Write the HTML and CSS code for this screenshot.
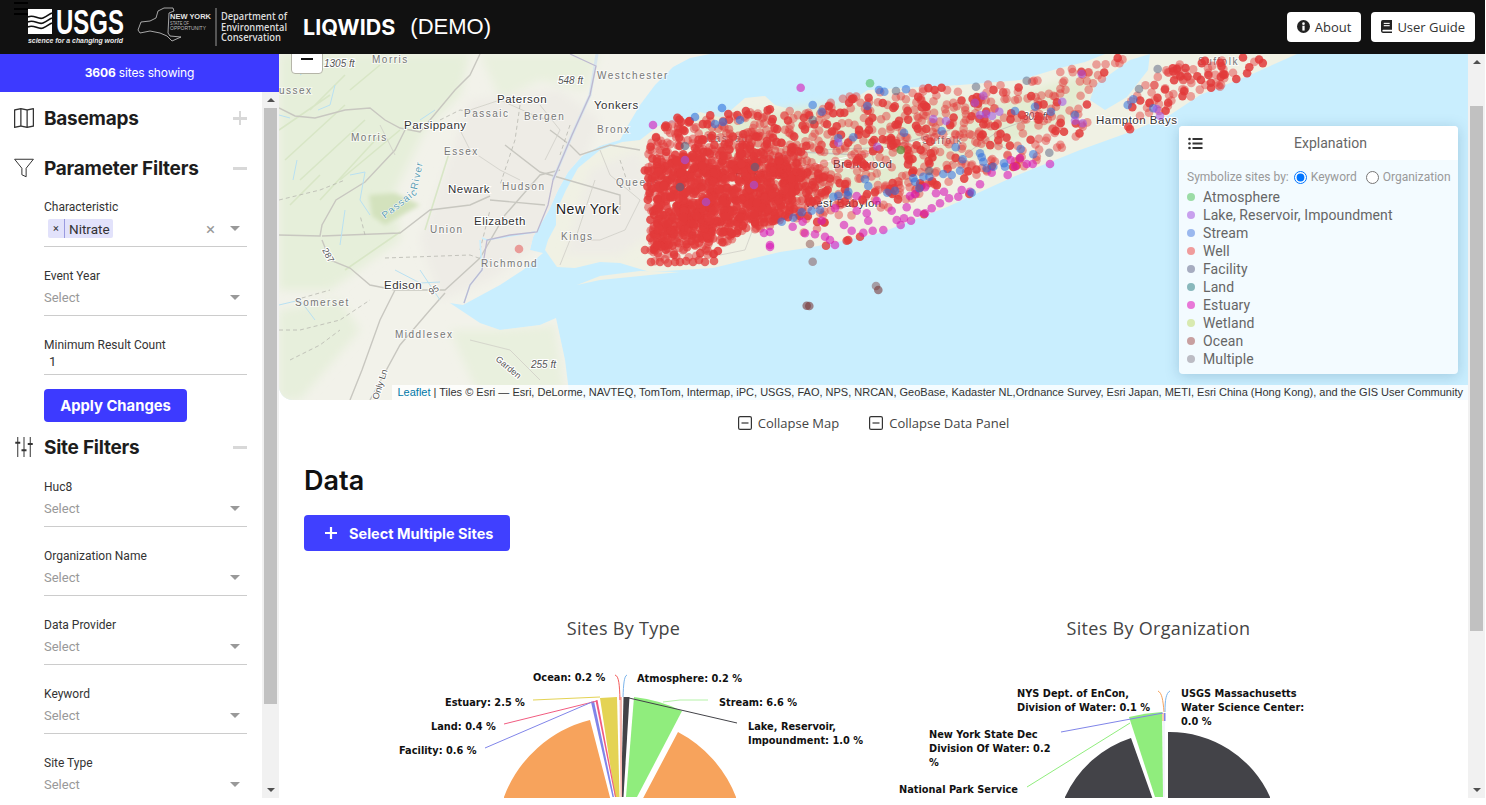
FILE: index.html
```html
<!DOCTYPE html>
<html lang="en">
<head>
    <meta charset="UTF-8">
    <meta name="viewport" content="width=device-width, initial-scale=1.0">
    <title>LIQWIDS (DEMO)</title>
    <link rel="stylesheet" href="styles.css">
</head>
<body>
    <header class="topbar">
        <div class="hamburger"><span></span><span></span><span></span></div>
        <svg class="logos" width="272" height="54" viewBox="28 0 272 54">
            <g class="usgs-mark">
                <rect x="28" y="9" width="24" height="25" fill="#fff"/>
                <path d="M28 17c6-3 10 3 15 1s6-4 9-5M28 22c6-3 10 3 15 1s6-4 9-5M28 27c6-3 10 3 15 1s6-4 9-5" fill="none" stroke="#111" stroke-width="1.7"/>
            </g>
            <text class="usgs-word" x="56" y="34" textLength="68" lengthAdjust="spacingAndGlyphs">USGS</text>
            <text class="usgs-tag" x="28" y="43" textLength="95" lengthAdjust="spacingAndGlyphs">science for a changing world</text>
            <path class="ny-state" d="M138 30 141 22 150 21 156 18 158 11 164 8 173 8 174 11 169 13 168 33 170 36 181 37 172 41 169 38 167 36 160 33 150 31 140 33Z"/>
            <text class="ny-big" x="170" y="19" textLength="41" lengthAdjust="spacingAndGlyphs">NEW YORK</text>
            <text class="ny-small" x="170" y="25" textLength="19" lengthAdjust="spacingAndGlyphs">STATE OF</text>
            <text class="ny-small" x="170" y="30" textLength="36" lengthAdjust="spacingAndGlyphs">OPPORTUNITY</text>
            <rect x="215.500" y="8" width="1" height="38" fill="#999"/>
            <text class="dec" x="221" y="20" textLength="66" lengthAdjust="spacingAndGlyphs">Department of</text>
            <text class="dec" x="221" y="31" textLength="66" lengthAdjust="spacingAndGlyphs">Environmental</text>
            <text class="dec" x="221" y="41" textLength="60" lengthAdjust="spacingAndGlyphs">Conservation</text>
        </svg>
        <div class="app-title">LIQWIDS</div>
        <div class="app-demo">(DEMO)</div>
        <div class="topbar-actions">
            <button class="top-btn">
                <svg width="13" height="13" viewBox="0 0 16 16"><circle cx="8" cy="8" r="8" fill="#222"/><rect x="6.600" y="7" width="2.800" height="6" fill="#fff"/><circle cx="8" cy="4.500" r="1.600" fill="#fff"/></svg>
                About
            </button>
            <button class="top-btn">
                <svg width="11" height="13" viewBox="0 0 12 14"><path d="M2 0h10v10.500H2.500a1 1 0 0 0 0 2H12V14H2a2 2 0 0 1-2-2V2a2 2 0 0 1 2-2z" fill="#222"/><rect x="3" y="3" width="6.500" height="1.200" fill="#fff"/><rect x="3" y="5.500" width="6.500" height="1.200" fill="#fff"/></svg>
                User Guide
            </button>
        </div>
    </header>

    <div class="app">
        <aside class="sidebar">
            <div class="sites-showing"><b>3606</b> sites showing</div>
            <div class="sidebar-body">
                <div class="filters">
                    <div class="section-head">
                        <svg class="section-icon" viewBox="0 0 16 16" fill="#333"><path fill-rule="evenodd" d="M15.817.113A.5.5 0 0 1 16 .5v14a.5.5 0 0 1-.402.49l-5 1a.502.502 0 0 1-.196 0L5.500 15.010l-4.902.98A.5.5 0 0 1 0 15.500v-14a.5.5 0 0 1 .402-.49l5-1a.5.5 0 0 1 .196 0L10.500.990l4.902-.98a.5.5 0 0 1 .415.103zM10 1.910l-4-.8v12.980l4 .8V1.910zm1 12.980 4-.8V1.110l-4 .8v12.980zm-6-.8V1.110l-4 .8v12.980l4-.8z"/></svg>
                        <h3>Basemaps</h3>
                        <span class="toggle plus"></span>
                    </div>
                    <div class="section-head">
                        <svg class="section-icon" viewBox="0 0 16 16" fill="none" stroke="#333" stroke-width=".8"><path d="M.5 1h15L9.700 8.200v6.800l-3.400-1.600V8.200z"/></svg>
                        <h3>Parameter Filters</h3>
                        <span class="toggle"></span>
                    </div>
                    <div class="section-fields">
                        <div class="field">
                            <label>Characteristic</label>
                            <div class="control">
                                <span class="tag"><span class="tag-x">×</span><span class="tag-text">Nitrate</span></span>
                                <span class="clear">×</span>
                                <span class="caret"></span>
                            </div>
                        </div>
                        <div class="field">
                            <label>Event Year</label>
                            <div class="control"><span class="placeholder">Select</span><span class="caret"></span></div>
                        </div>
                        <div class="field field-short">
                            <label>Minimum Result Count</label>
                            <div class="control"><span class="count">1</span></div>
                        </div>
                        <button class="apply-btn">Apply Changes</button>
                    </div>
                    <div class="section-head">
                        <svg class="section-icon" viewBox="0 0 16 16" fill="none" stroke="#333" stroke-width=".8"><path d="M3 0v16M8 0v16M13 0v16"/><path d="M1 4.500h4M6 10.500h4M11 5.500h4" stroke-width="1.600"/></svg>
                        <h3>Site Filters</h3>
                        <span class="toggle"></span>
                    </div>
                    <div class="section-fields site-fields">
                        <div class="field"><label>Huc8</label><div class="control"><span class="placeholder">Select</span><span class="caret"></span></div></div>
                        <div class="field"><label>Organization Name</label><div class="control"><span class="placeholder">Select</span><span class="caret"></span></div></div>
                        <div class="field"><label>Data Provider</label><div class="control"><span class="placeholder">Select</span><span class="caret"></span></div></div>
                        <div class="field"><label>Keyword</label><div class="control"><span class="placeholder">Select</span><span class="caret"></span></div></div>
                        <div class="field"><label>Site Type</label><div class="control"><span class="placeholder">Select</span><span class="caret"></span></div></div>
                    </div>
                </div>
                <div class="scrollbar">
                    <span class="arrow-up"></span>
                    <div class="track side-track"><div class="thumb"></div></div>
                    <span class="arrow-down"></span>
                </div>
            </div>
        </aside>

        <main class="content">
            <div class="content-scroll">
                <section class="map">
                    <svg class="map-canvas" viewBox="279 54 1189 346" preserveAspectRatio="none">
                        <defs>
                            <filter id="soft"><feGaussianBlur stdDeviation="5"/></filter>
                            <filter id="softer"><feGaussianBlur stdDeviation="2"/></filter>
                            <clipPath id="land-clip"><path d="M279 54H710L690 58 673 67 655 85 640 105 627 127 620 140 600 146 582 156 568 172 558 190 549 210 533 237 530 250 543 253 523 270 500 285 463 305 450 303 480 323 500 330 540 325 556 318 565 360 570 400H279Z"/></clipPath>
                        </defs>
                        <rect x="279" y="54" width="1189" height="346" fill="#c9eefe"/>
                        <path fill="#f2f2ea" d="M279 54H710L690 58 673 67 655 85 640 105 627 127 620 140 600 146 582 156 568 172 558 190 549 210 533 237 530 250 543 253 523 270 500 285 463 305 450 303 480 323 500 330 540 325 556 318 565 360 570 400H279Z"/>
                        <path fill="#f0f1e4" d="M622 142 640 140 658 126 685 120 700 112 722 118 745 98 765 96 775 105 800 112 840 108 868 90 900 88 960 85 1020 80 1060 68 1085 62 1105 54H1297L1250 75 1200 95 1170 115 1130 132 1080 150 1013 177 947 207 880 233 813 247 780 252 713 268 650 272 620 263 600 262 575 268 557 267 545 250 548 240 556 225 556 212 566 190 578 168 600 150Z"/>
                        <path fill="#f0f1e4" d="M577 285 600 276 640 271 680 272 640 276 600 280Z"/>
                        <path fill="#c9eefe" d="M1095 85 1130 60 1150 54 1148 70 1127 97 1105 110 1090 100Z"/>
                        <g clip-path="url(#land-clip)">
                            <g filter="url(#soft)">
                                <path fill="#e6efda" d="M279 54H470L460 95 425 130 395 190 400 240 330 290 279 290Z"/>
                                <path fill="#e9f0de" d="M480 54H600L585 90 540 80 500 100Z"/>
                                <path fill="#e7efdc" d="M279 310 340 300 360 330 300 400H279Z"/>
                                <path fill="#e9f0de" d="M450 330 500 330 555 325 565 395 480 400Z"/>
                                <path fill="#eeece6" d="M470 100 560 90 600 120 560 230 490 280 440 300 420 240Z"/>
                            </g>
                            <path fill="#d3e2bd" filter="url(#softer)" d="M369 195 395 193 420 205 385 225 372 216Z"/>
                            <path fill="none" stroke="#d8e6c6" stroke-width="1.600" d="M279 130 330 95M285 160 345 105M300 180 365 120M320 200 380 135M340 180 400 130M450 150 425 230M345 270 400 232M310 110 345 75M350 90 380 65M290 205 320 175"/>
                        </g>
                        <g filter="url(#soft)">
                            <path fill="#e3ecd1" d="M690 120 780 110 860 100 1000 100 1100 70 1070 120 950 170 830 205 760 200Z"/>
                            <path fill="#eeece6" d="M590 170 640 150 655 230 620 255 565 255Z"/>
                        </g>
                        <g fill="none">
                            <path stroke="#c8c7c0" stroke-width="1.400" d="M279 108 295 116 315 118 345 110 370 108 385 120 400 128 420 132 440 108 455 90 470 75 480 54M279 235 320 236 322 225 336 200 365 182 395 150 405 130M322 236 400 233 430 210 470 205 490 196M322 240 330 260 350 268 370 285 395 290 445 290 480 258 505 215 540 175 560 170M395 290 380 320 362 370 350 400M445 293 430 310 400 345 370 400M490 200 545 205M505 145 540 172 620 195 620 210M640 150 610 145 580 155 570 145 550 130M770 158 800 152 860 155 950 130"/>
                            <path stroke="#cfcec6" stroke-width=".8" d="M600 150 610 175 640 200 625 230 600 240 575 240 585 210 595 180M560 265 570 240M760 210 745 250 720 255M380 125 395 155M460 130 470 150 500 170 520 180M540 105 560 130 545 160M470 110 500 100 540 118 560 120M470 340 510 350 540 380"/>
                            <path stroke="#b8b8b0" stroke-width=".8" stroke-dasharray="4 3" d="M279 200 320 190 345 180M365 235 360 215M385 258 470 255 490 262M295 300 330 290M440 120 460 110 490 115M520 105 515 140 500 185M279 330 300 330 340 320 370 300M290 360 320 345 340 330M570 125 560 155M480 250 490 210M620 160 630 190"/>
                            <path stroke="#b8e0f2" stroke-width="1" d="M279 115 290 118M300 75 318 62M318 110 330 105 335 85M297 160 293 180M350 175 365 172 360 200 370 215M395 270 420 283 440 282M279 305 300 300 315 320M340 245 345 210M420 120 435 110M420 270 440 300"/>
                            <path stroke="#d8e6ee" stroke-width="3" d="M597 54 590 95 572 135 553 180"/>
                            <path stroke="#c9eefe" stroke-width="1.500" d="M482 238 487 240 510 236 535 232M480 240 482 270 470 285 464 303"/>
                            <path stroke="#bdb8d0" stroke-width="1.300" d="M570 54 596 66 590 95 572 135 553 180 548 205 537 232 510 235 487 240 482 270 470 285 464 303"/>
                            <path stroke="#c4c4bc" stroke-width=".8" d="M820 150 870 148 880 180M950 165 1000 130 1040 115M985 140 1010 150"/>
                        </g>
                        <path fill="none" stroke="#fff" stroke-width="1" d="M790 170 870 152 950 135"/>
                        <g class="map-labels">
                            <text class="t-town" x="497" y="103">Paterson</text>
                            <text class="t-town" x="594" y="109">Yonkers</text>
                            <text class="t-town" x="404" y="129">Parsippany</text>
                            <text class="t-town" x="448" y="193">Newark</text>
                            <text class="t-town" x="474" y="225">Elizabeth</text>
                            <text class="t-town" x="384" y="289">Edison</text>
                            <text class="t-city" x="556" y="214">New York</text>
                            <text class="t-town" x="1096" y="124">Hampton Bays</text>
                            <text class="t-town" x="833" y="168">Brentwood</text>
                            <text class="t-town" x="805" y="207">West Babylon</text>
                            <text class="t-town" x="735" y="177">Hicksville</text>
                            <text class="t-county" x="372" y="63">Morris</text>
                            <text class="t-county" x="351" y="141">Morris</text>
                            <text class="t-county" x="279" y="94">ussex</text>
                            <text class="t-county" x="464" y="117">Passaic</text>
                            <text class="t-county" x="524" y="120">Bergen</text>
                            <text class="t-county" x="597" y="133">Bronx</text>
                            <text class="t-county" x="444" y="155">Essex</text>
                            <text class="t-county" x="502" y="190">Hudson</text>
                            <text class="t-county" x="616" y="186">Queens</text>
                            <text class="t-county" x="430" y="233">Union</text>
                            <text class="t-county" x="561" y="240">Kings</text>
                            <text class="t-county" x="481" y="267">Richmond</text>
                            <text class="t-county" x="295" y="306">Somerset</text>
                            <text class="t-county" x="395" y="338">Middlesex</text>
                            <text class="t-county" x="597" y="79">Westchester</text>
                            <text class="t-county" x="706" y="142">Nassau</text>
                            <text class="t-county" x="922" y="144">Suffolk</text>
                            <text class="t-county" x="1198" y="65">Suffolk</text>
                            <text class="t-elev" x="324" y="67">1305 ft</text>
                            <text class="t-elev" x="558" y="84">548 ft</text>
                            <text class="t-elev" x="531" y="368">255 ft</text>
                            <text class="t-elev" x="1023" y="120">302 ft</text>
                            <text class="t-road" transform="translate(322 250) rotate(62)">287</text>
                            <text class="t-road" transform="translate(431 295) rotate(-30)">95</text>
                            <text class="t-road" transform="translate(378 400) rotate(-72)">Only Ln</text>
                            <text class="t-road" transform="translate(495 360) rotate(40)">Garden</text>
                            <text class="t-river" transform="translate(385 219) rotate(-38)">Passaic</text>
                            <text class="t-river" transform="translate(417 190) rotate(-78)">River</text>
                        </g>
                        <g id="dots"></g>
                    </svg>
                    <div class="zoom-control"><span class="zoom-minus"></span></div>
                    <div class="legend">
                        <div class="legend-head">
                            <svg width="15" height="13" viewBox="0 0 15 13" fill="#333"><circle cx="1.500" cy="2" r="1.300"/><circle cx="1.500" cy="6.500" r="1.300"/><circle cx="1.500" cy="11" r="1.300"/><rect x="4.500" y="1" width="10" height="2"/><rect x="4.500" y="5.500" width="10" height="2"/><rect x="4.500" y="10" width="10" height="2"/></svg>
                            <span class="legend-title">Explanation</span>
                        </div>
                        <div class="legend-body">
                            <div class="symbolize">
                                <span>Symbolize sites by:</span>
                                <label><input type="radio" name="symbol" checked> Keyword</label>
                                <label><input type="radio" name="symbol"> Organization</label>
                            </div>
                            <div class="legend-row"><i class="swatch sw-atmosphere"></i>Atmosphere</div>
                            <div class="legend-row"><i class="swatch sw-lake"></i>Lake, Reservoir, Impoundment</div>
                            <div class="legend-row"><i class="swatch sw-stream"></i>Stream</div>
                            <div class="legend-row"><i class="swatch sw-well"></i>Well</div>
                            <div class="legend-row"><i class="swatch sw-facility"></i>Facility</div>
                            <div class="legend-row"><i class="swatch sw-land"></i>Land</div>
                            <div class="legend-row"><i class="swatch sw-estuary"></i>Estuary</div>
                            <div class="legend-row"><i class="swatch sw-wetland"></i>Wetland</div>
                            <div class="legend-row"><i class="swatch sw-ocean"></i>Ocean</div>
                            <div class="legend-row"><i class="swatch sw-multiple"></i>Multiple</div>
                        </div>
                    </div>
                    <div class="attribution"><a>Leaflet</a> | Tiles © Esri — Esri, DeLorme, NAVTEQ, TomTom, Intermap, iPC, USGS, FAO, NPS, NRCAN, GeoBase, Kadaster NL,Ordnance Survey, Esri Japan, METI, Esri China (Hong Kong), and the GIS User Community</div>
                </section>

                <div class="collapse-row">
                    <span class="collapse-item"><svg width="14" height="14" viewBox="0 0 14 14" fill="none" stroke="#333" stroke-width="1.200"><rect x=".6" y=".6" width="12.800" height="12.800" rx="1.500"/><path d="M3.500 7h7"/></svg>Collapse Map</span>
                    <span class="collapse-item"><svg width="14" height="14" viewBox="0 0 14 14" fill="none" stroke="#333" stroke-width="1.200"><rect x=".6" y=".6" width="12.800" height="12.800" rx="1.500"/><path d="M3.500 7h7"/></svg>Collapse Data Panel</span>
                </div>

                <section class="data-panel">
                    <h2>Data</h2>
                    <button class="multi-btn">
                        <svg width="12" height="12" viewBox="0 0 12 12" stroke="#fff" stroke-width="2.200"><path d="M6 0v12M0 6h12"/></svg>
                        Select Multiple Sites
                    </button>
                    <div class="charts">
                        <div class="chart">
                            <div class="chart-title">Sites By Type</div>
                            <svg class="pie" width="535" height="150" viewBox="356 648 535 150">
                                <path fill="#f7a35c" d="M621 840 590 720A124 124 0 0 0 504 797V850H736V797A124 124 0 0 0 678 732Z"/>
                                <path fill="#90ed7d" d="M634 697Q660 700 682 711L637 797H626Z"/>
                                <path fill="#434348" d="M623.500 697H629.500L623.500 797H621Z"/>
                                <path fill="#e4d354" d="M600 698 617 697 619.500 797H615Z"/>
                                <path fill="#f15c80" d="M595.500 700.500 597.500 700 616 797H615Z"/>
                                <path fill="#8085e9" d="M591 702 594 701 614 797H612.500Z"/>
                                <path fill="#f7b9b0" d="M619.500 697H622V797H620.500Z"/>
                                <g fill="none" stroke-width="1">
                                    <path stroke="#f45b5b" d="M615 675C619 676 619.500 685 620 700"/>
                                    <path stroke="#7cb5ec" d="M627 675C624 676 623.500 685 623 697"/>
                                    <path stroke="#e4d354" d="M533 700 600 697"/>
                                    <path stroke="#b5f2a8" d="M708 700 680 700 663 702"/>
                                    <path stroke="#434348" d="M737 723 629 698"/>
                                    <path stroke="#f15c80" d="M504 724 597 701"/>
                                    <path stroke="#8085e9" d="M485 748 592 702"/>
                                </g>
                                <text class="pie-label" x="533" y="681">Ocean: 0.2 %</text>
                                <text class="pie-label" x="637" y="682">Atmosphere: 0.2 %</text>
                                <text class="pie-label" x="719" y="706">Stream: 6.6 %</text>
                                <text class="pie-label" x="445" y="706">Estuary: 2.5 %</text>
                                <text class="pie-label" x="431" y="730">Land: 0.4 %</text>
                                <text class="pie-label" x="399" y="754">Facility: 0.6 %</text>
                                <text class="pie-label" x="748" y="730">Lake, Reservoir,</text>
                                <text class="pie-label" x="748" y="744">Impoundment: 1.0 %</text>
                            </svg>
                        </div>
                        <div class="chart">
                            <div class="chart-title">Sites By Organization</div>
                            <svg class="pie" width="535" height="150" viewBox="891 648 535 150">
                                <path fill="#434348" d="M1168 842 1131 738A110 110 0 0 0 1065 797V850H1270V797A110 110 0 0 0 1168 732Z"/>
                                <path fill="#90ed7d" d="M1129 717Q1145 713 1162 712L1163 797H1155Z"/>
                                <rect x="1163.500" y="713" width="1" height="84" fill="#e8e8f8"/>
                                <rect x="1164" y="713" width="1.500" height="8" fill="#8085e9"/>
                                <rect x="1162.500" y="713" width="1" height="8" fill="#f7a35c"/>
                                <g fill="none" stroke-width="1">
                                    <path stroke="#90ed7d" d="M1027 787 1130 723"/>
                                    <path stroke="#8085e9" d="M1061 732 1163 713"/>
                                    <path stroke="#f7a35c" d="M1158 691C1162 693 1163 700 1164 712"/>
                                    <path stroke="#7cb5ec" d="M1170 691C1166 693 1165 700 1165 712"/>
                                </g>
                                <text class="pie-label" x="1017" y="697">NYS Dept. of EnCon,</text>
                                <text class="pie-label" x="1017" y="711">Division of Water: 0.1 %</text>
                                <text class="pie-label" x="929" y="738">New York State Dec</text>
                                <text class="pie-label" x="929" y="752">Division Of Water: 0.2</text>
                                <text class="pie-label" x="929" y="766">%</text>
                                <text class="pie-label" x="899" y="793">National Park Service</text>
                                <text class="pie-label" x="1181" y="697">USGS Massachusetts</text>
                                <text class="pie-label" x="1181" y="711">Water Science Center:</text>
                                <text class="pie-label" x="1181" y="725">0.0 %</text>
                            </svg>
                        </div>
                    </div>
                </section>
            </div>
            <div class="scrollbar page-scrollbar">
                <span class="arrow-up"></span>
                <div class="track page-track"><div class="thumb"></div></div>
                <span class="arrow-down"></span>
            </div>
        </main>
    </div>
    <script src="map.js"></script>
</body>
</html>
```

FILE: styles.css
```css
* {
    box-sizing: border-box;
}
html, body {
    margin: 0;
    height: 100%;
    overflow: hidden;
    background-color: #ffffff;
    font-family: 'Roboto', sans-serif;
}
.topbar {
    position: relative;
    display: flex;
    align-items: center;
    height: 54px;
    width: 1485px;
    padding: 0 10px 0 28px;
    background-color: #111111;
    color: #ffffff;
}
.hamburger {
    position: absolute;
    left: 14px;
    top: 2px;
    width: 14px;
}
.hamburger span {
    display: block;
    height: 2px;
    margin-bottom: 3.500px;
    background-color: #000000;
}
.logos {
    flex-shrink: 0;
}
.usgs-word {
    font-family: 'Liberation Sans', sans-serif;
    font-size: 35px;
    font-weight: 700;
    fill: #ffffff;
}
.usgs-tag {
    font-family: 'Liberation Sans', sans-serif;
    font-size: 8px;
    font-weight: 700;
    font-style: italic;
    fill: #e8e8e8;
}
.ny-state {
    fill: none;
    stroke: #cccccc;
    stroke-width: 0.8;
}
.ny-big {
    font-family: 'Liberation Sans', sans-serif;
    font-size: 7.500px;
    font-weight: 700;
    fill: #e4e4e4;
}
.ny-small {
    font-family: 'Liberation Sans', sans-serif;
    font-size: 4.500px;
    fill: #bbbbbb;
}
.dec {
    font-family: 'Open Sans', sans-serif;
    font-size: 10px;
    font-weight: 600;
    fill: #dddddd;
}
.app-title {
    margin-left: 3px;
    font-family: 'Inter', sans-serif;
    font-size: 21.500px;
    font-weight: 700;
}
.app-demo {
    margin-left: 15px;
    font-family: 'Liberation Sans', sans-serif;
    font-size: 22px;
}
.topbar-actions {
    display: flex;
    gap: 10px;
    margin-left: auto;
}
.top-btn {
    display: flex;
    align-items: center;
    gap: 5px;
    height: 30px;
    padding: 0 10px 1px;
    border: none;
    border-radius: 4px;
    background-color: #ffffff;
    color: #333333;
    font-family: 'Open Sans', sans-serif;
    font-size: 13px;
}
.app {
    display: flex;
    height: 744px;
}
.sidebar {
    display: flex;
    flex-direction: column;
    width: 279px;
    flex-shrink: 0;
}
.sites-showing {
    height: 38px;
    line-height: 38px;
    text-align: center;
    background-color: #3d3aff;
    color: #ffffff;
    font-family: 'Inter', sans-serif;
    font-size: 12px;
    letter-spacing: -0.150px;
}
.sites-showing b {
    font-weight: 700;
}
.sidebar-body {
    display: flex;
    flex: 1;
    min-height: 0;
}
.filters {
    flex: 1;
    padding: 11px 15px 0 14px;
    overflow: hidden;
}
.section-head {
    display: flex;
    align-items: center;
    height: 30px;
    margin-bottom: 20px;
}
.section-icon {
    width: 20px;
    height: 20px;
    margin-right: 10px;
    flex-shrink: 0;
}
.section-head h3 {
    flex: 1;
    margin: 0;
    font-family: 'Inter', sans-serif;
    font-size: 19px;
    font-weight: 700;
    letter-spacing: -0.250px;
    color: #1d1d1d;
}
.toggle {
    position: relative;
    width: 14px;
    height: 14px;
}
.toggle::before {
    content: "";
    position: absolute;
    left: 0;
    top: 6px;
    width: 14px;
    height: 2.500px;
    background-color: #d8d8d8;
}
.toggle.plus::after {
    content: "";
    position: absolute;
    left: 5.700px;
    top: 0;
    width: 2.500px;
    height: 14px;
    background-color: #d8d8d8;
}
.section-fields {
    margin: -3px 0 0 30px;
}
.site-fields {
    margin-top: -2px;
}
.field {
    margin-bottom: 22px;
}
.field label {
    display: block;
    height: 15px;
    line-height: 15px;
    font-size: 12px;
    color: #333333;
}
.control {
    display: flex;
    align-items: center;
    height: 32px;
    padding-bottom: 4px;
    border-bottom: 1px solid #cccccc;
    font-size: 13px;
}
.field-short {
    margin-bottom: 14px;
}
.field-short .control {
    height: 22px;
    padding-bottom: 5px;
}
.placeholder {
    flex: 1;
    color: #999999;
}
.count {
    padding-left: 5px;
    color: #333333;
}
.caret {
    width: 0;
    height: 0;
    margin: 0 7px 0 3px;
    border-left: 5px solid transparent;
    border-right: 5px solid transparent;
    border-top: 5px solid #999999;
}
.tag {
    display: flex;
    align-items: center;
    height: 19px;
    margin-left: 4px;
    border-radius: 2px;
    background-color: #e2e2fb;
    color: #333333;
}
.tag-x {
    width: 17px;
    height: 19px;
    line-height: 19px;
    text-align: center;
    border-right: 1px solid #9a9ae0;
    font-size: 11px;
}
.tag-text {
    padding: 0 3px 0 4px;
    font-size: 13.500px;
}
.clear {
    margin: 0 12px 0 auto;
    font-size: 17px;
    color: #999999;
}
.apply-btn {
    display: block;
    width: 143px;
    height: 33px;
    margin-bottom: 10px;
    border: none;
    border-radius: 4px;
    background-color: #3d3aff;
    color: #ffffff;
    font-family: 'Inter', sans-serif;
    font-size: 14.800px;
    font-weight: 700;
}
.scrollbar {
    display: flex;
    flex-direction: column;
    align-items: center;
    width: 17px;
    flex-shrink: 0;
    background-color: #f1f1f1;
}
.arrow-up, .arrow-down {
    width: 0;
    height: 0;
    flex-shrink: 0;
    border-left: 4px solid transparent;
    border-right: 4px solid transparent;
}
.arrow-up {
    margin: 6px 0 5px;
    border-bottom: 4px solid #505050;
}
.arrow-down {
    margin: 5px 0 6px;
    border-top: 4px solid #505050;
}
.track {
    flex: 1;
    width: 100%;
    padding: 0 2px;
}
.thumb {
    width: 100%;
    background-color: #c1c1c1;
}
.side-track .thumb {
    height: 596px;
    margin-top: 1px;
}
.page-track {
    padding-top: 37px;
}
.page-track .thumb {
    height: 525px;
}
.content {
    display: flex;
    flex: 1;
    min-width: 0;
    margin-right: 1px;
}
.content-scroll {
    flex: 1;
    min-width: 0;
    overflow: hidden;
}
.map {
    position: relative;
    height: 346px;
    overflow: hidden;
    border-bottom-left-radius: 14px;
}
.map-canvas {
    display: block;
    width: 100%;
    height: 100%;
}
.t-town, .t-city, .t-county, .t-elev, .t-road, .t-river {
    font-family: 'Liberation Sans', sans-serif;
    paint-order: stroke;
    stroke: #ffffff;
    stroke-width: 2px;
}
.t-town {
    font-size: 11.500px;
    letter-spacing: 0.500px;
    fill: #333333;
}
.t-city {
    font-size: 14px;
    letter-spacing: 0.500px;
    fill: #222222;
}
.t-county {
    font-size: 10px;
    letter-spacing: 1.500px;
    fill: #777777;
    stroke-opacity: 0.6;
}
.t-elev {
    font-size: 10px;
    font-style: italic;
    fill: #555555;
}
.t-road {
    font-size: 9px;
    fill: #555555;
}
.t-river {
    font-size: 10px;
    letter-spacing: 1px;
    fill: #5a9cb0;
    stroke-width: 1px;
}
.zoom-control {
    position: absolute;
    left: 12px;
    top: -10px;
    display: flex;
    align-items: center;
    justify-content: center;
    width: 32px;
    height: 30px;
    padding-top: 8px;
    border: 1px solid #b5b5a8;
    border-radius: 4px;
    background-color: #ffffff;
}
.zoom-minus {
    width: 12px;
    height: 2px;
    margin-bottom: 8px;
    background-color: #111111;
}
.legend {
    position: absolute;
    top: 72px;
    left: 900px;
    width: 279px;
    height: 248px;
    border-radius: 4px;
    background-color: #f3fbff;
    box-shadow: 0 2px 14px rgba(40, 90, 130, 0.25);
    overflow: hidden;
}
.legend-head {
    position: relative;
    display: flex;
    align-items: center;
    height: 34px;
    padding-left: 9px;
    background-color: #ffffff;
}
.legend-title {
    flex: 1;
    text-align: center;
    font-size: 14px;
    color: #666666;
}
.legend-body {
    padding: 8px 8px 0;
}
.symbolize {
    display: flex;
    align-items: center;
    gap: 5px;
    height: 18px;
    margin-bottom: 2px;
    white-space: nowrap;
    font-size: 12px;
    color: #999999;
}
.symbolize label {
    display: flex;
    align-items: center;
    gap: 4px;
    margin-right: 4px;
}
.symbolize input {
    width: 13px;
    height: 13px;
    margin: 0;
}
.legend-row {
    display: flex;
    align-items: center;
    height: 18px;
    font-size: 14px;
    letter-spacing: 0.100px;
    color: #666666;
}
.swatch {
    width: 8px;
    height: 8px;
    margin-right: 8px;
    border-radius: 50%;
}
.sw-atmosphere { background-color: #9bdca6; }
.sw-lake { background-color: #c8a0ee; }
.sw-stream { background-color: #9ab8ee; }
.sw-well { background-color: #f09c9c; }
.sw-facility { background-color: #a6acc0; }
.sw-land { background-color: #88b8bc; }
.sw-estuary { background-color: #e878d8; }
.sw-wetland { background-color: #d8eab0; }
.sw-ocean { background-color: #c8a0a0; }
.sw-multiple { background-color: #bcbcc4; }
.attribution {
    position: absolute;
    right: 0;
    bottom: 0;
    height: 15px;
    line-height: 15px;
    padding: 0 5px;
    white-space: nowrap;
    background-color: rgba(255, 255, 255, 0.8);
    font-family: 'Liberation Sans', sans-serif;
    font-size: 11px;
    color: #333333;
}
.attribution a {
    color: #0078a8;
}
.collapse-row {
    display: flex;
    justify-content: center;
    gap: 30px;
    margin-top: 14px;
    height: 18px;
}
.collapse-item {
    display: flex;
    align-items: center;
    gap: 6px;
    font-family: 'Open Sans', sans-serif;
    font-size: 13px;
    color: #444444;
}
.data-panel {
    padding: 0 25px;
}
.data-panel h2 {
    margin: 31px 0 0;
    height: 36px;
    line-height: 36px;
    font-family: 'Inter', sans-serif;
    font-size: 27px;
    font-weight: 600;
    color: #111111;
}
.multi-btn {
    display: flex;
    align-items: center;
    gap: 12px;
    height: 36px;
    width: 206px;
    margin-top: 16px;
    padding-left: 21px;
    border: none;
    border-radius: 4px;
    background-color: #4040ff;
    color: #ffffff;
    font-family: 'Inter', sans-serif;
    font-size: 14.500px;
    font-weight: 700;
}
.charts {
    display: grid;
    grid-template-columns: 535px 535px;
    margin: 65px 0 0 52px;
}
.chart-title {
    height: 24px;
    line-height: 24px;
    text-align: center;
    font-family: 'Open Sans', sans-serif;
    font-size: 18px;
    letter-spacing: 0.300px;
    color: #444444;
}
.pie {
    display: block;
    margin-top: 8px;
    overflow: hidden;
}
.pie-label {
    font-family: 'DejaVu Sans', sans-serif;
    font-size: 9.800px;
    font-weight: 700;
    fill: #111111;
}
```

FILE: map.js
```javascript
// scatter of site markers on the map, seeded so the picture stays the same
var seed = 20211;
function rand() {
    seed = (seed + 0x6D2B79F5) | 0;
    var t = Math.imul(seed ^ (seed >>> 15), 1 | seed);
    t = (t + Math.imul(t ^ (t >>> 7), 61 | t)) ^ t;
    return ((t ^ (t >>> 14)) >>> 0) / 4294967296;
}

function inside(poly, x, y) {
    var hit = false;
    for (var i = 0, j = poly.length - 1; i < poly.length; j = i++) {
        var a = poly[i], b = poly[j];
        if ((a[1] > y) !== (b[1] > y) && x < (b[0] - a[0]) * (y - a[1]) / (b[1] - a[1]) + a[0]) {
            hit = !hit;
        }
    }
    return hit;
}

var colors = {
    well: '#e23a3a',
    estuary: '#d718b8',
    stream: '#2f6fdc',
    lake: '#a24fe8',
    facility: '#56607e',
    ocean: '#7a3a3a',
    atmosphere: '#4cc060',
    land: '#5a8a30'
};

var group = document.getElementById('dots');

function dot(x, y, kind, opacity) {
    var c = document.createElementNS('http://www.w3.org/2000/svg', 'circle');
    c.setAttribute('cx', x.toFixed(1));
    c.setAttribute('cy', y.toFixed(1));
    c.setAttribute('r', '4.3');
    c.setAttribute('fill', colors[kind]);
    c.setAttribute('fill-opacity', opacity);
    group.appendChild(c);
}

// some sites are doubled up in the reference, so they read as solid red
function scatter(poly, count, opacity, solid) {
    var xs = poly.map(function (p) { return p[0]; });
    var ys = poly.map(function (p) { return p[1]; });
    var minX = Math.min.apply(null, xs), maxX = Math.max.apply(null, xs);
    var minY = Math.min.apply(null, ys), maxY = Math.max.apply(null, ys);
    var made = 0;
    while (made < count) {
        var x = minX + rand() * (maxX - minX);
        var y = minY + rand() * (maxY - minY);
        if (inside(poly, x, y)) {
            dot(x, y, 'well', rand() < solid ? 0.85 : opacity);
            made++;
        }
    }
}

// list coordinates are in the zoomed scale of the east-end sketch: x / 3 + 780, y / 3 + 50
function east(list, kind, opacity) {
    list.forEach(function (p) {
        dot(p[0] / 3 + 780, p[1] / 3 + 50, kind, opacity);
    });
}

var west = [[655, 128], [690, 110], [728, 128], [770, 132], [800, 152], [832, 168], [830, 192], [790, 222], [740, 236], [715, 254], [680, 260], [650, 262], [643, 170]];
var core = [[655, 160], [740, 145], [805, 170], [790, 215], [700, 245], [652, 255]];
var body = [[700, 112], [790, 108], [870, 92], [960, 86], [1020, 82], [1075, 68], [1115, 56], [1125, 60], [1090, 90], [1088, 128], [1040, 165], [1000, 170], [960, 180], [905, 205], [850, 218], [800, 235], [790, 190], [760, 140]];
var fork = [[1130, 100], [1160, 70], [1200, 56], [1270, 56], [1290, 56], [1240, 80], [1175, 108], [1130, 125]];

scatter(west, 650, 0.5, 0.3);
scatter(core, 650, 0.7, 0.35);
scatter(body, 620, 0.45, 0.3);
scatter(fork, 85, 0.45, 0.3);

[[675, 262], [680, 262], [686, 261], [693, 262], [699, 260], [705, 262], [714, 261], [651, 262], [660, 262], [668, 263], [645, 250], [657, 245], [519, 249]].forEach(function (p, i) {
    dot(p[0], p[1], 'well', i === 12 ? 0.45 : 0.75);
});
east([[200, 572], [205, 570], [240, 560], [138, 587], [432, 493], [568, 432], [1045, 230], [1050, 238]], 'well', 0.8);

east([[62, 113], [125, 512], [75, 550], [105, 553], [135, 560], [150, 570], [165, 585], [192, 525], [215, 542], [250, 548], [278, 542], [310, 540], [38, 530], [68, 515], [260, 490], [265, 512], [230, 482], [165, 475], [335, 482], [380, 472], [350, 510], [372, 505], [362, 525], [393, 512], [412, 488], [435, 490], [455, 475], [480, 460], [507, 445], [535, 440], [545, 420], [570, 425], [600, 403], [390, 438], [405, 432], [435, 412], [468, 430], [492, 425], [290, 452], [230, 438], [683, 375], [635, 368], [692, 330], [705, 350], [740, 342], [758, 342], [810, 342], [720, 325]], 'estuary', 0.6);
east([[125, 185], [98, 165], [262, 168], [297, 120], [313, 125], [378, 118], [485, 243], [527, 292], [548, 328], [600, 310], [605, 322], [610, 335], [620, 355], [640, 350], [705, 183], [765, 170], [813, 185], [885, 195], [722, 297], [760, 313], [672, 340], [675, 350], [515, 375], [490, 372], [540, 362], [430, 380], [448, 380], [400, 385], [405, 395], [418, 415], [322, 428], [345, 422], [265, 408], [255, 388], [205, 425], [203, 435], [175, 437], [160, 440], [120, 480], [95, 482], [65, 487], [40, 503], [5, 515], [175, 265], [220, 262], [372, 248], [575, 428], [1043, 165], [1060, 148], [1120, 175]], 'stream', 0.55);
east([[460, 207], [498, 213], [600, 195], [618, 192], [636, 198], [658, 185], [610, 137], [585, 158], [905, 72], [885, 212], [908, 220], [847, 155], [1140, 198], [1130, 177], [292, 290], [175, 278]], 'lake', 0.55);
east([[740, 92], [1077, 117], [808, 308], [1133, 57], [448, 362], [98, 210], [588, 110], [348, 123]], 'facility', 0.5);
east([[90, 582], [98, 635], [288, 708]], 'ocean', 0.45);
east([[295, 720], [80, 767], [88, 768]], 'ocean', 0.6);
east([[270, 100]], 'atmosphere', 0.6);
east([[362, 300]], 'land', 0.7);

// a few odd markers in the dense western block, given as page coordinates
[[653, 125, 'estuary'], [706, 202, 'lake'], [754, 185, 'lake'], [764, 233, 'estuary'], [770, 232, 'estuary'], [770, 245, 'estuary'], [770, 247, 'estuary'], [695, 117, 'stream'], [722, 108, 'stream'], [723, 122, 'stream'], [715, 124, 'stream'], [740, 120, 'stream'], [685, 146, 'facility'], [685, 160, 'lake'], [755, 167, 'facility'], [680, 187, 'facility']].forEach(function (p) {
    dot(p[0], p[1], p[2], 0.6);
});
```
